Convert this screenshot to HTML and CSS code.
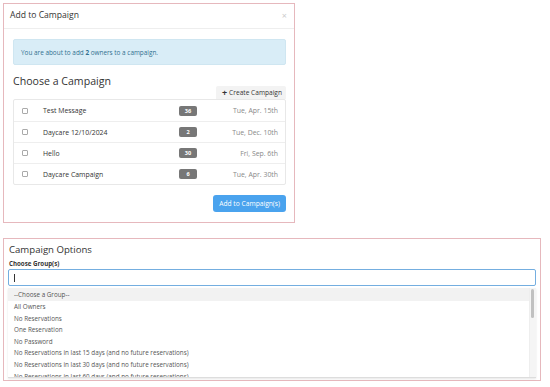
FILE: index.html
```html
<!DOCTYPE html>
<html>
<head>
<meta charset="utf-8">
<link rel="stylesheet" href="styles.css">
</head>
<body>
<div class="modal">
  <div class="modal-header">
    <span class="modal-title">Add to Campaign</span>
    <span class="close">×</span>
  </div>
  <div class="modal-body">
    <div class="alert"><span>You are about to add <b>2</b> owners to a campaign.</span></div>
    <h2 class="section-title">Choose a Campaign</h2>
    <div class="create-row"><span class="create-btn"><span class="plus">+</span>Create Campaign</span></div>
    <div class="table">
      <div class="row"><span class="cb"></span><span class="name">Test Message</span><span class="badge">36</span><span class="date">Tue, Apr. 15th</span></div>
      <div class="row"><span class="cb"></span><span class="name">Daycare 12/10/2024</span><span class="badge">2</span><span class="date">Tue, Dec. 10th</span></div>
      <div class="row"><span class="cb"></span><span class="name">Hello</span><span class="badge">30</span><span class="date">Fri, Sep. 6th</span></div>
      <div class="row"><span class="cb"></span><span class="name">Daycare Campaign</span><span class="badge">6</span><span class="date">Tue, Apr. 30th</span></div>
    </div>
    <div class="footer"><span class="primary-btn">Add to Campaign(s)</span></div>
  </div>
</div>
<div class="options">
  <div class="options-title">Campaign Options</div>
  <div class="label">Choose Group(s)</div>
  <div class="input"><span class="caret"></span></div>
  <div class="dropdown">
    <div class="items">
      <div class="item active">--Choose a Group--</div>
      <div class="item">All Owners</div>
      <div class="item">No Reservations</div>
      <div class="item">One Reservation</div>
      <div class="item">No Password</div>
      <div class="item">No Reservations in last 15 days (and no future reservations)</div>
      <div class="item">No Reservations in last 30 days (and no future reservations)</div>
      <div class="item">No Reservations in last 60 days (and no future reservations)</div>
    </div>
    <div class="scrollbar"><div class="thumb"></div></div>
  </div>
</div>
</body>
</html>
```
FILE: styles.css
```css
* { box-sizing: border-box; }
body {
  margin: 0;
  padding: 3px 0 0 3px;
  background: #fff;
  font-family: "Open Sans", "Liberation Sans", sans-serif;
  color: #333;
}
.modal {
  width: 292px;
  height: 220px;
  border: 1px solid #e6b8bd;
  background: #fff;
}
.modal-header {
  height: 25px;
  border-bottom: 1px solid #eee;
  display: flex;
  align-items: center;
  justify-content: space-between;
  padding: 0 7px 2px 6px;
}
.modal-title { font-size: 8.6px; color: #333; }
.close { font-size: 9px; color: #ccc; }
.modal-body { padding: 10px 8px 0 9px; }
.alert {
  height: 26px;
  background: #d9edf7;
  border: 1px solid #cfe6f1;
  border-radius: 2px;
  color: #31708f;
  font-size: 6.4px;
  display: flex;
  align-items: center;
  padding-left: 7px;
}
.alert b { font-weight: 700; }
.section-title {
  margin: 8px 0 0 0;
  font-size: 10.6px;
  font-weight: 400;
  color: #333;
  line-height: 16px;
}
.create-row { display: flex; justify-content: flex-end; margin-top: -3px; }
.create-btn {
  background: #f3f3f3;
  font-size: 6.6px;
  height: 13px;
  padding: 0 4px 0 6px;
  display: flex;
  align-items: center;
  color: #333;
  border-radius: 2px 2px 0 0;
}
.plus { font-weight: 700; font-size: 9px; margin-right: 2px; line-height: 1; }
.table {
  border: 1px solid #e8e8e8;
  border-radius: 2px;
}
.row {
  height: 21px;
  display: flex;
  align-items: center;
  border-top: 1px solid #eee;
  font-size: 6.9px;
  padding: 0 7px 0 8px;
}
.row:first-child { border-top: none; }
.cb {
  width: 6px; height: 6px;
  border: 1px solid #aaa;
  border-radius: 1px;
  margin-right: 15px;
  flex: none;
}
.name { flex: 1; color: #333; }
.badge {
  background: #777;
  color: #fff;
  font-size: 5.6px;
  font-weight: 700;
  border-radius: 2px;
  height: 10px;
  min-width: 15px;
  padding: 0 5px;
  display: flex;
  align-items: center;
  justify-content: center;
  margin-right: 2px;
}
.badge { min-width: 18px; }
.date { width: 79px; text-align: right; color: #888; }
.footer { display: flex; justify-content: flex-end; margin-top: 10px; }
.primary-btn {
  background: #4aa3ee;
  color: #fff;
  font-size: 6.7px;
  height: 17px;
  padding: 0 6px;
  border-radius: 3px;
  display: flex;
  align-items: center;
}
.options {
  margin-top: 15px;
  width: 538px;
  height: 143px;
  border: 1px solid #e6b8bd;
  padding: 4px 4px 0 4px;
}
.options-title { font-size: 9.6px; color: #333; line-height: 14px; padding-left: 1px; }
.label { font-size: 6.2px; font-weight: 700; color: #333; margin-top: 2px; line-height: 10px; padding-left: 1px; }
.input {
  height: 17px;
  border: 1.5px solid #74aee0;
  border-radius: 2px;
  display: flex;
  align-items: center;
  padding-left: 5px;
}
.caret { width: 1px; height: 8px; background: #333; }
.dropdown {
  margin-top: 2px;
  display: flex;
  height: 90px;
  border-bottom: 1px solid #ddd;
  box-shadow: 0 1px 2px rgba(0,0,0,0.1);
  overflow: hidden;
}
.items { flex: 1; }
.item {
  font-size: 6.3px;
  color: #555;
  height: 11.6px;
  line-height: 11.6px;
  padding-left: 6px;
  white-space: nowrap;
}
.item.active { background: #f2f2f2; height: 13px; line-height: 13px; }
.scrollbar { width: 7px; background: #f5f5f5; padding: 1px 2px 0 1px; border-left: 1px solid #eee; }
.thumb { height: 29px; background: #c1c1c1; border-radius: 2px; }
```
